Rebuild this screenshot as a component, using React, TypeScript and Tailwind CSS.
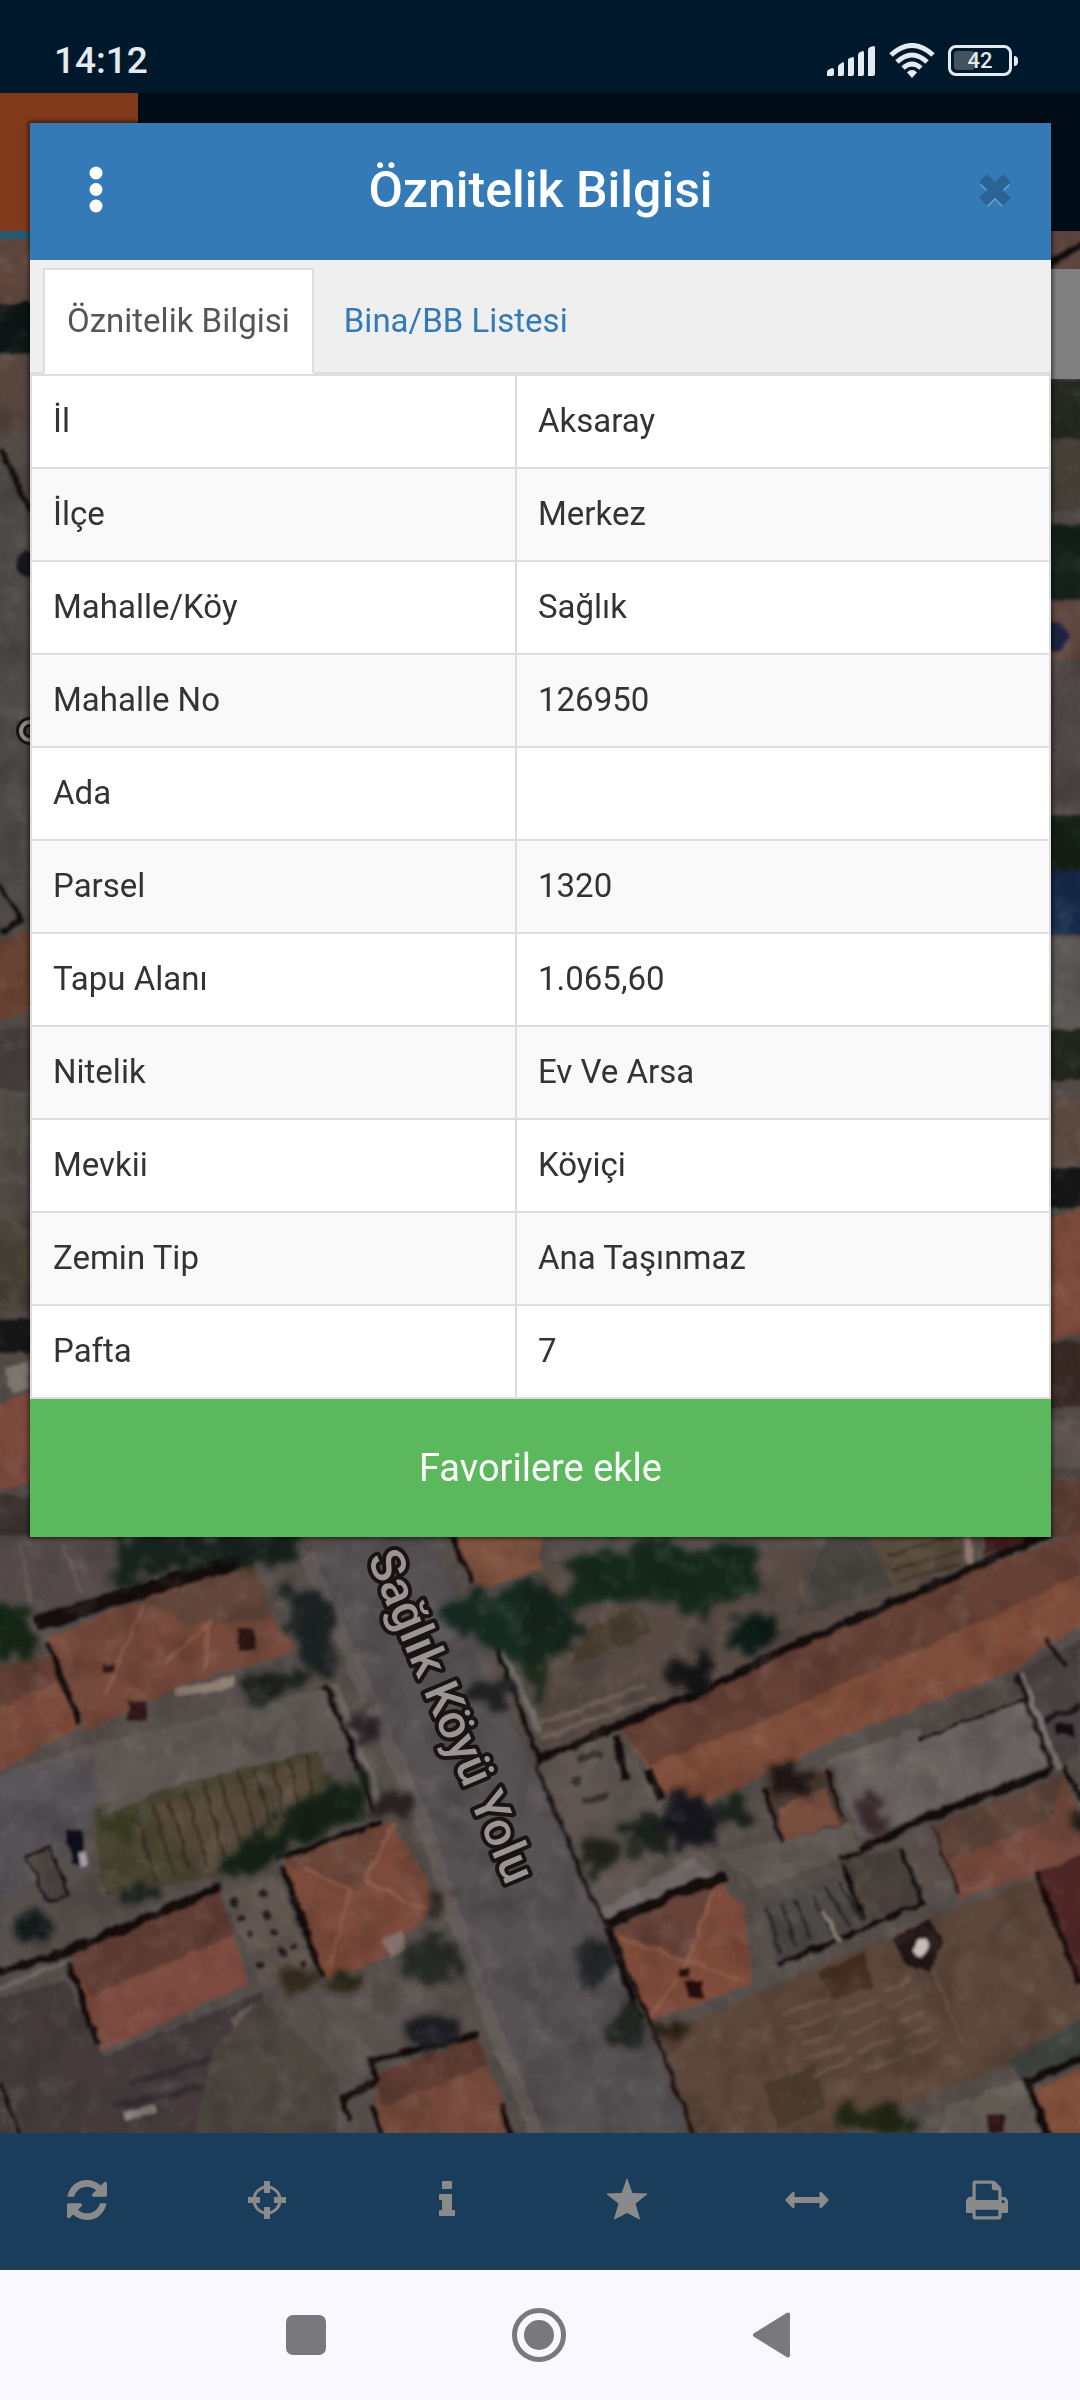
import { useState } from "react";

const rows = [
  { label: "İl", value: "Aksaray" },
  { label: "İlçe", value: "Merkez" },
  { label: "Mahalle/Köy", value: "Sağlık" },
  { label: "Mahalle No", value: "126950" },
  { label: "Ada", value: "" },
  { label: "Parsel", value: "1320" },
  { label: "Tapu Alanı", value: "1.065,60" },
  { label: "Nitelik", value: "Ev Ve Arsa" },
  { label: "Mevkii", value: "Köyiçi" },
  { label: "Zemin Tip", value: "Ana Taşınmaz" },
  { label: "Pafta", value: "7" },
];

function StatusBar() {
  return (
    <div className="h-[93px] bg-[#00182b] pl-[54px] pr-[62px] pt-7 flex items-center justify-between text-[#e4eaef]">
      <span className="text-[37px] leading-none font-medium">14:12</span>
      <div className="flex items-center gap-3">
        {/* Signal */}
        <svg width="50" height="32" viewBox="0 0 50 32" fill="currentColor" aria-hidden="true">
          <path d="M1 31v-4q0-1 1-2l4-2q2 0 2 2v4q0 2-2 2z" />
          <path d="M12 31v-9q0-2 2-3l3-2q1 0 1 2v10q0 2-2 2z" />
          <path d="M22 31V15q0-2 2-2l3-1q1 0 1 2v15q0 2-2 2z" />
          <path d="M32 31V10q0-2 2-3l3-1q1 0 1 2v21q0 2-2 2z" />
          <path d="M42 31V5q0-2 2-3l4-1q1 0 1 2v26q0 2-2 2z" />
        </svg>
        {/* Wi-Fi */}
        <svg width="48" height="36" viewBox="0 0 48 36" fill="none" stroke="currentColor" aria-hidden="true">
          <path d="M3 12Q24-7 45 12" strokeWidth="5" />
          <path d="M9 19Q24 5 39 19" strokeWidth="5" />
          <path d="M15 25Q24 17 33 25" strokeWidth="5" />
          <path d="M24 27.5q3 0 4.500 2L24 34.500l-4.500-5q1.500-2 4.500-2z" fill="currentColor" />
        </svg>
        {/* Battery */}
        <div className="flex items-center gap-0.5">
          <div className="relative w-16 h-[31px] rounded-lg border-3 border-current flex items-center justify-center">
            <div className="absolute left-[3px] top-[3px] w-[21px] h-[19px] rounded-sm bg-[#43525e]" />
            <span className="relative text-[22px] leading-none font-medium">42</span>
          </div>
          <div className="w-1 h-2.5 rounded-r-sm bg-current" />
        </div>
      </div>
    </div>
  );
}

function SatelliteMap() {
  return (
    <svg
      className="w-full flex-1 min-h-0 block"
      viewBox="0 231 1080 1902"
      preserveAspectRatio="xMidYMax slice"
      aria-hidden="true"
    >
      <defs>
        <filter id="soft" x="-5%" y="-5%" width="110%" height="110%">
          <feTurbulence type="fractalNoise" baseFrequency="0.06" numOctaves="3" seed="4" result="n" />
          <feDisplacementMap in="SourceGraphic" in2="n" scale="8" xChannelSelector="R" yChannelSelector="G" result="d" />
          <feGaussianBlur in="d" stdDeviation="1.800" />
        </filter>
        <filter id="leafy" x="-10%" y="-10%" width="120%" height="120%">
          <feTurbulence type="fractalNoise" baseFrequency="0.05" numOctaves="3" seed="9" result="n" />
          <feDisplacementMap in="SourceGraphic" in2="n" scale="36" xChannelSelector="R" yChannelSelector="G" result="d" />
          <feGaussianBlur in="d" stdDeviation="3" />
        </filter>
        <filter id="mottle" x="0" y="0" width="100%" height="100%">
          <feTurbulence type="fractalNoise" baseFrequency="0.025" numOctaves="4" seed="12" />
          <feColorMatrix values="0 0 0 0 0  0 0 0 0 0  0 0 0 0 0  2 0 0 0 -0.85" />
        </filter>
        <filter id="glow" x="0" y="0" width="100%" height="100%">
          <feTurbulence type="fractalNoise" baseFrequency="0.04" numOctaves="4" seed="31" />
          <feColorMatrix values="0 0 0 0 0.7  0 0 0 0 0.66  0 0 0 0 0.62  1.6 0 0 0 -0.82" />
        </filter>
      </defs>

      <rect y="231" width="1080" height="1902" fill="#524a46" />

      {/* West edge */}
      <g filter="url(#soft)">
        <rect x="-10" y="231" width="50" height="70" fill="#624840" />
        <rect x="-10" y="302" width="50" height="52" fill="#0f1313" />
        <path d="M-10 354h50v70l-50 10z" fill="#54453c" />
        <path d="M-10 440 40 520v410l-50-30z" fill="#4d4847" />
        <path d="M0 450 32 512" stroke="#12110e" strokeWidth="6" />
        <circle cx="29" cy="565" r="13" fill="#14171b" />
        <path d="M-5 880 22 920 0 932" stroke="#110d0c" strokeWidth="5" fill="none" />
        <path d="M-10 944l50-16v80l-50 14z" fill="#684231" />
        <rect x="-10" y="1030" width="50" height="60" fill="#443c3a" />
        <rect x="-10" y="1090" width="50" height="60" fill="#575049" />
        <rect x="-10" y="1220" width="50" height="90" fill="#4a4339" />
        <rect x="-10" y="1318" width="50" height="34" fill="#181612" />
        <path d="M4 1368 30 1360v28l-20 6z" fill="#7b746b" />
        <path d="M-10 1406 40 1388v92l-50 14z" fill="#7b4a3c" />
        <rect x="-10" y="1496" width="50" height="50" fill="#3d3433" />
      </g>

      {/* East edge */}
      <g filter="url(#soft)">
        <path d="M1040 231h50v50h-50z" fill="#60443f" />
        <path d="M1048 266 1084 242" stroke="#110a0a" strokeWidth="8" />
        <rect x="1040" y="379" width="50" height="70" fill="#252a24" />
        <rect x="1040" y="440" width="50" height="70" fill="#454139" />
        <rect x="1040" y="526" width="50" height="74" fill="#14241a" />
        <rect x="1040" y="600" width="50" height="60" fill="#5f4640" />
        <circle cx="1054" cy="636" r="15" fill="#1c2240" />
        <rect x="1040" y="660" width="50" height="150" fill="#504644" />
        <rect x="1040" y="815" width="50" height="60" fill="#122018" />
        <rect x="1040" y="870" width="50" height="66" fill="#192b4c" />
        <rect x="1040" y="940" width="50" height="90" fill="#5b5856" />
        <rect x="1040" y="1030" width="50" height="50" fill="#24251f" />
        <rect x="1040" y="1100" width="50" height="66" fill="#5c4b43" />
        <rect x="1040" y="1168" width="50" height="40" fill="#131412" />
        <path d="M1040 1222 1090 1205v126l-50 14z" fill="#7c4c3b" />
        <rect x="1040" y="1342" width="50" height="66" fill="#3a2926" />
        <rect x="1040" y="1420" width="50" height="48" fill="#615753" />
        <rect x="1040" y="1480" width="50" height="60" fill="#583a30" />
      </g>

      {/* Southern blocks */}
      <g filter="url(#soft)">
        <g transform="translate(0 1540) scale(.3444 .3827)">
          <rect x="-20" y="-10" width="3180" height="1600" fill="#57504c" />
          <path d="M0-10H340V130L110 210 0 160z" fill="#544b4b" />
          <path d="M60 20 90 160M180 10 240 140" stroke="#655a58" strokeWidth="8" />

          {/* Road */}
          <path d="M890 20 1240-10 1568 650 1730 960 1810 1160 2010 1580H1570L1400 1200 1230 740z" fill="#575152" />
          <path d="M890 40 1230 740 1400 1200 1570 1580" stroke="#645d5a" strokeWidth="40" fill="none" />
          <path d="M940 380 1000 500 1090 710" stroke="#120e0e" strokeWidth="20" fill="none" />
          <path d="M970 380 1110 690" stroke="#6f6863" strokeWidth="16" fill="none" />

          {/* Houses west of the road */}
          <path d="M-10 330 150 300 230 490-10 605z" fill="#7c4b3a" />
          <path d="M-10 330 150 300 175 370-10 440z" fill="#634034" />
          <path d="M140 250 730 50 800 210 860 290 560 370 250 500z" fill="#754a3a" />
          <path d="M420 160 730 60 800 210 540 220z" fill="#64463b" />
          <path d="M420 170 370 260 310 400M620 210 480 320M600 220V340" stroke="#8a5c49" strokeWidth="10" fill="none" />
          <path d="M100 220 420 130 730 40" stroke="#120a0b" strokeWidth="44" fill="none" />
          <path d="M140 270 230 480" stroke="#120a0a" strokeWidth="18" />
          <path d="M690 230h50v60h-50zM370 420h55v55h-55zM300 325h35v20h-35z" fill="#2f1314" />
          <path d="M510 400 680 370" stroke="#8d7e72" strokeWidth="22" />
          <path d="M240 540 940 390 1010 540 290 720-10 660V620z" fill="#605a56" />
          <path d="M-10 620 270 560 290 730-10 960z" fill="#57515a" opacity=".6" />

          {/* Vegetable garden */}
          <path d="M275 740 500 640 920 550 960 640 640 880 300 930z" fill="#4c4532" />
          <path d="M430 700 580 870 900 770 900 580z" fill="#57493a" />
          <g stroke="#383224" strokeWidth="9">
            <path d="M400 710 450 890M440 690 510 880M490 680 550 860M540 650 600 850M590 630 650 830M640 620 700 800M690 610 750 780M740 600 790 760M790 580 830 740M840 570 870 710M890 560 910 690" />
          </g>
          <path d="M75 830 145 800 200 925 140 945z" fill="#4c4340" stroke="#181012" strokeWidth="10" />
          <path d="M190 760 240 760 255 850 205 850z" fill="#10111e" />
          <path d="M225 820 250 810 255 850 232 855z" fill="#a49da5" />

          <path d="M820 840 1130 735 1240 890 1250 970 1100 1100 945 1145z" fill="#7c4c3b" />
          <path d="M820 840 1130 735 1060 900 1020 920z" fill="#6b4438" />
          <path d="M1020 915 960 1110M1060 890 1240 970M1060 890 1140 740M1020 915 880 860" stroke="#8c5c49" strokeWidth="9" />
          <path d="M800 835 1110 735" stroke="#140d0b" strokeWidth="18" />
          <path d="M820 850 935 1140" stroke="#140a0a" strokeWidth="20" />
          <path d="M1110 1040 1170 1020 1180 1070 1130 1090z" fill="#82706a" />

          <path d="M200 1080 640 920 720 1160 295 1335z" fill="#7e4c3f" />
          <path d="M200 1080 640 920 680 1030 260 1195z" fill="#603c34" />
          <path d="M-10 1130 200 1075 640 905" stroke="#120b0c" strokeWidth="26" fill="none" />
          <path d="M-10 1175 190 1105" stroke="#706963" strokeWidth="12" />
          <path d="M200 1100 285 1320" stroke="#120a0b" strokeWidth="22" />
          <path d="M650 930 800 870 910 1110 760 1170z" fill="#605650" />
          <g fill="#2b1e20">
            <circle cx="680" cy="945" r="11" />
            <circle cx="765" cy="925" r="12" />
            <circle cx="700" cy="988" r="11" />
            <circle cx="775" cy="980" r="12" />
            <circle cx="725" cy="1030" r="11" />
            <circle cx="795" cy="1028" r="11" />
            <circle cx="820" cy="1075" r="11" />
            <circle cx="755" cy="1110" r="13" />
            <circle cx="850" cy="1060" r="10" />
            <circle cx="880" cy="1110" r="10" />
          </g>

          <path d="M-10 1200 190 1150 300 1350 760 1180 900 1560H-10z" fill="#443b3d" />
          <path d="M0 1420 60 1560" stroke="#120c0c" strokeWidth="12" />
          <path d="M670 1250 770 1200 790 1270 700 1310z" fill="#6a5c58" />
          <path d="M360 1505 450 1485" stroke="#8a7f7b" strokeWidth="22" />
          <path d="M380 1420 640 1350M330 1480 620 1420" stroke="#392d33" strokeWidth="20" />
          <path d="M620 1330 760 1200 980 1400 980 1560H560z" fill="#4e463f" />
          <path d="M900 1160 1180 1090 1340 1280 1010 1380z" fill="#5a5350" />
          <path d="M1080 1400 1390 1295 1500 1560H1110z" fill="#754a3b" />
          <path d="M1080 1400 1390 1295 1420 1370 1110 1480z" fill="#5f3d33" />
          <path d="M1000 1460 1090 1410 1080 1360 1390 1290" stroke="#170d0d" strokeWidth="20" fill="none" />
          <path d="M990 1450 1020 1520M1080 1480 1110 1560M1450 1470 1490 1560" stroke="#170d0d" strokeWidth="18" />

          {/* Across the road */}
          <path d="M1310-10H1568V80L1395 130z" fill="#7e5340" />
          <path d="M1310-10 1375 110M1430 240 1570 590" stroke="#130c0b" strokeWidth="18" />
          <path d="M1440 240 1568 500" stroke="#73716c" strokeWidth="12" />

          <g transform="translate(1568 0)">
            <path d="M0 60 1240-10 1240 70 0 560z" fill="#584c44" />
            <path d="M830-10H1000L1030 120 740 200z" fill="#484541" />
            <path d="M950-10H1225L1230 60 1030 130z" fill="#5a4c3e" />
            <path d="M1010 40 1200-10M1020 80 1220 30M1040 110 1220 60" stroke="#3c3428" strokeWidth="7" />
            <path d="M1290-10H1440L1290 40z" fill="#3f1c1c" />
            <path d="M140 230 280 170 330 240 90 330z" fill="#4b3f30" />

            <path d="M230 490 1240 90 1568-20V220L1380 340 860 520 480 690 360 660z" fill="#7f4d3b" />
            <path d="M230 490 1240 90 1568-20V90L1310 200 700 450 320 590z" fill="#654135" />
            <path d="M-10 575 480 390 700 290 1240 80 1480-20" stroke="#150d0e" strokeWidth="26" fill="none" />
            <path d="M1235-10 1255 60" stroke="#90766f" strokeWidth="22" />
            <path d="M0 480 300 380M0 520 340 410" stroke="#6f625a" strokeWidth="12" />

            <path d="M0 590 220 500 350 690 520 860 190 980z" fill="#5f5753" />
            <path d="M220 510 250 630M310 600 350 680" stroke="#180d0d" strokeWidth="28" />
            <path d="M110 570 180 560M90 630h30M120 680 200 670" stroke="#3a302f" strokeWidth="20" />
            <path d="M840 570 1400 400 1470 590 930 780z" fill="#6a6260" />
            <path d="M1100 480 1380 350 1400 410 1110 510z" fill="#504a42" />
            <path d="M1100 520 1410 415" stroke="#1c1617" strokeWidth="10" />
            <path d="M1380 350 1490 600" stroke="#1d1515" strokeWidth="16" />
            <path d="M1400 350 1510 600" stroke="#7c7572" strokeWidth="18" />
            <path d="M1400 340 1568 260V560L1510 590z" fill="#4a4143" />
            <path d="M1460 470 1568 440M1470 260 1530 330" stroke="#1e1416" strokeWidth="16" />
            <path d="M1500 480h50v30h-50z" fill="#150e11" />
            <path d="M520 820 900 740 930 810 640 910z" fill="#625b57" />
            <path d="M640 650 830 600 900 740 700 790z" fill="#4b3b33" />
            <path d="M690 700 825 640 870 740 710 790z" fill="#774d3d" />
            <path d="M650 650 700 790M830 600 880 720" stroke="#1a0f0d" strokeWidth="14" />
            <path d="M930 810 1110 730 1490 600" stroke="#130c0d" strokeWidth="26" fill="none" />
            <path d="M1520 590 1568 680" stroke="#130c0d" strokeWidth="16" />

            <path d="M1140 745 1520 615 1580 760V840L1215 935z" fill="#74483c" />
            <path d="M1140 745 1520 615 1490 730 1190 835z" fill="#5f443a" />
            <path d="M1140 750 1215 920" stroke="#2b1614" strokeWidth="10" />
            <path d="M870 840 1050 800 1115 950 930 1000z" fill="#4c423d" />
            <path d="M1060 780 1140 750 1210 930 1120 950z" fill="#5a504b" />
            <path d="M870 835 930 815M1050 805 1110 950 690 1110M880 850 940 990" stroke="#181011" strokeWidth="16" fill="none" />
            <path d="M640 940 860 880 940 1000 690 1100z" fill="#4d4a47" />
            <path d="M660 960 700 1080M700 950 740 1060M740 940 790 1040M790 930 850 1030M830 910 900 1010M870 890 930 990" stroke="#2c2727" strokeWidth="10" />
            <path d="M820 970 870 1050" stroke="#8b8177" strokeWidth="10" />

            <path d="M170 970 440 830 520 880 200 990z" fill="#706a68" />
            <path d="M210 1020 510 890 590 960 620 1160 320 1255z" fill="#7e4c3b" />
            <path d="M210 1020 510 890 430 1100z" fill="#664238" />
            <path d="M510 890 430 1100 320 1250M430 1100 230 1040M430 1100 600 1150" stroke="#8c5c49" strokeWidth="8" fill="none" />
            <path d="M190 1005 400 920 540 880" stroke="#130b0c" strokeWidth="30" fill="none" />
            <path d="M190 1010 290 1250" stroke="#130b0c" strokeWidth="20" />
            <path d="M400 1120h35v20h-35zM420 1150h55v48h-40z" fill="#281010" />

            {/* Ploughed field */}
            <path d="M350 1290 1210 960 1440 880 1580 1150V1290L840 1560H440z" fill="#5b473a" />
            <path d="M810 1130 940 1080 970 1170 850 1200z" fill="#442d21" />
            <path d="M650 1420 800 1370 830 1480 690 1540z" fill="#4c3a2f" />
            <g stroke="#6d5546" strokeWidth="11">
              <path d="M700 1240 830 1200M720 1280 850 1240M760 1320 870 1280M770 1360 890 1320M790 1400 900 1360M880 1240 980 1200M900 1290 1010 1250M920 1340 1030 1300M940 1390 1050 1350M1000 1180 1080 1150M1020 1220 1100 1190M1040 1260 1120 1230M1060 1300 1140 1270M1080 1340 1160 1310" />
            </g>
            <path d="M1140 1120 1230 1320" stroke="#6d5546" strokeWidth="10" />
            <path d="M1020 1040 1130 990 1175 1050 1130 1130 1060 1110z" fill="#211315" />
            <circle cx="1105" cy="1066" r="21" fill="#c8bcb9" />
            <path d="M1440 870 1580 820V1170z" fill="#4f2527" />
            <path d="M1440 870 1568 1160" stroke="#1b0e0d" strokeWidth="20" />
            <path d="M1360 1360 1580 1250V1350L1400 1420z" fill="#404443" />
            <path d="M1180 1480 1400 1410 1470 1560H1160z" fill="#645b54" />
            <path d="M1430 1440 1580 1380V1560H1480z" fill="#824f3a" />
            <path d="M1580 1350 1415 1415 1475 1560" stroke="#150c0d" strokeWidth="26" fill="none" />
            <path d="M1300 1500h50v50h-50z" fill="#32191a" />
            <path d="M-10 590 150 940 200 1010 320 1260 450 1560" stroke="#1b1414" strokeWidth="14" fill="none" />
          </g>
        </g>
      </g>

      {/* Trees */}
      <g filter="url(#leafy)">
        <g transform="translate(0 1540) scale(.3444 .3827)">
          <path d="M340-10H880L860 60 560 60 340 120z" fill="#15211f" />
          <path d="M-20 170 90 180 110 300-20 320z" fill="#182719" />
          <path d="M820 120 950 120 980 340 880 340z" fill="#1b2322" />
          <path d="M690 360 830 320 900 370 720 440z" fill="#1a201d" />
          <path d="M640 850 780 760 930 640 1060 620 1080 720 640 890z" fill="#152119" />
          <ellipse cx="1060" cy="480" rx="45" ry="45" fill="#2c2426" />
          <ellipse cx="1140" cy="690" rx="50" ry="30" fill="#2b2422" />
          <ellipse cx="350" cy="740" rx="70" ry="40" fill="#373a22" />
          <ellipse cx="90" cy="1010" rx="60" ry="50" fill="#181b1e" />
          <ellipse cx="400" cy="925" rx="60" ry="28" fill="#1b201b" />
          <ellipse cx="1260" cy="1105" rx="85" ry="62" fill="#262a26" />
          <ellipse cx="1270" cy="940" rx="35" ry="35" fill="#322825" />
          <ellipse cx="1260" cy="1290" rx="75" ry="50" fill="#1f1f20" />
          <ellipse cx="870" cy="1155" rx="50" ry="28" fill="#322a1e" />
          <ellipse cx="1010" cy="1155" rx="60" ry="18" fill="#2c2618" />
          <path d="M1270 180 1568 90V400L1490 300 1330 250z" fill="#182a24" />
          <path d="M1370 380 1480 360 1490 440 1400 440z" fill="#232320" />
          <g transform="translate(1568 0)">
            <path d="M80 40 300 0 620 40 640 120 480 200 330 150 80 180z" fill="#12291f" />
            <path d="M-30 100 90 140 100 260-30 360z" fill="#13251d" />
            <path d="M-30 340 40 320 20 430-30 440z" fill="#232b1e" />
            <ellipse cx="615" cy="245" rx="60" ry="55" fill="#0f1a17" />
            <ellipse cx="445" cy="350" rx="60" ry="45" fill="#181818" />
            <ellipse cx="440" cy="735" rx="80" ry="70" fill="#17191a" />
            <ellipse cx="570" cy="710" rx="55" ry="45" fill="#1b201b" />
            <ellipse cx="310" cy="770" rx="60" ry="60" fill="#1b211d" />
            <ellipse cx="180" cy="825" rx="50" ry="45" fill="#20201a" />
            <ellipse cx="160" cy="1110" rx="55" ry="60" fill="#242628" />
            <ellipse cx="250" cy="1270" rx="55" ry="55" fill="#232522" />
            <ellipse cx="730" cy="630" rx="70" ry="35" fill="#221815" />
            <ellipse cx="390" cy="1285" rx="50" ry="22" fill="#2b2115" />
            <ellipse cx="1560" cy="735" rx="40" ry="40" fill="#1b1a15" />
            <ellipse cx="960" cy="1520" rx="130" ry="40" fill="#212519" />
            <ellipse cx="960" cy="710" rx="40" ry="50" fill="#3b2c2e" />
          </g>
        </g>
      </g>

      <rect y="231" width="1080" height="1902" filter="url(#mottle)" opacity=".18" />
      <rect y="231" width="1080" height="1902" filter="url(#glow)" opacity=".18" />

      {/* Search box behind the panel */}
      <rect x="1000" y="269" width="80" height="110" fill="#808080" />

      {/* Street names */}
      <g
        fill="#9a9592"
        stroke="#181414"
        strokeWidth="8"
        strokeLinejoin="round"
        paintOrder="stroke"
        fontFamily="Roboto, sans-serif"
        fontWeight="500"
        fontSize="48"
      >
        <text transform="translate(367 1558) rotate(67)">Sağlık Köyü Yolu</text>
      </g>
      <circle cx="30" cy="731" r="9" fill="none" stroke="#181414" strokeWidth="10" />
      <circle cx="30" cy="731" r="9" fill="none" stroke="#8f8a88" strokeWidth="4" />
    </svg>
  );
}

function AttributePanel() {
  const [tab, setTab] = useState("info");

  const tabBase = "px-[22px] pb-0.5 -mb-0.5 h-[106px] text-[33px] leading-none border-2 cursor-pointer";
  const tabOn = "bg-white text-[#555] border-[#ddd] border-b-white";
  const tabOff = "text-[#337ab7] border-transparent";

  return (
    <section className="relative ml-[30px] mr-[29px] mt-[30px] bg-white shadow-[0_0_4px_2px_rgba(0,0,0,0.5)]">
      <header className="h-[137px] bg-[#337ab7] px-[38px] pb-1 flex items-center justify-between">
        <button type="button" aria-label="Menü" className="w-14 h-14 flex items-center justify-center">
          <svg width="14" height="48" viewBox="0 0 14 48" fill="#fff">
            <circle cx="7" cy="7" r="6.500" />
            <circle cx="7" cy="23.500" r="6.500" />
            <circle cx="7" cy="40" r="6.500" />
          </svg>
        </button>
        <h1 className="text-[50px] leading-none font-medium text-white">Öznitelik Bilgisi</h1>
        <button type="button" aria-label="Kapat" className="w-14 h-14 flex items-center justify-end">
          <svg width="36" height="40" viewBox="0 0 36 40" strokeWidth="11">
            <path d="M7 11 29 33M29 11 7 33" stroke="#6ea3d3" />
            <path d="M6 8 30 32M30 8 6 32" stroke="#2a6496" />
          </svg>
        </button>
      </header>

      <div role="tablist" className="bg-[#efefef] pt-2 px-[13px] flex items-end gap-1.5 border-b-2 border-[#ddd]">
        <button
          type="button"
          role="tab"
          aria-selected={tab === "info"}
          onClick={() => setTab("info")}
          className={`${tabBase} ${tab === "info" ? tabOn : tabOff}`}
        >
          Öznitelik Bilgisi
        </button>
        <button
          type="button"
          role="tab"
          aria-selected={tab === "list"}
          onClick={() => setTab("list")}
          className={`${tabBase} ${tab === "list" ? tabOn : tabOff}`}
        >
          Bina/BB Listesi
        </button>
      </div>

      <table className="w-full border-collapse border-2 border-[#ddd] text-[33px] leading-none text-[#333]">
        <tbody>
          {rows.map((row) => (
            <tr key={row.label} className="h-[93px] even:bg-[#f9f9f9]">
              <th scope="row" className="w-[485px] border-2 border-[#ddd] px-[21px] pb-0.5 text-left font-normal">
                {row.label}
              </th>
              <td className="border-2 border-[#ddd] px-[21px] pb-0.5">{row.value}</td>
            </tr>
          ))}
        </tbody>
      </table>

      <button type="button" className="block w-full h-[138px] bg-[#5cb85c] text-white text-[38px] leading-none">
        Favorilere ekle
      </button>
    </section>
  );
}

function MapToolbar() {
  const btn = "flex items-center justify-center pr-1.5 pb-1";
  return (
    <div className="relative h-[137px] bg-[#1a3d5c] text-[#8a8a8a] grid grid-cols-6">
      <button type="button" aria-label="Yenile" className={btn}>
        <svg width="40" height="40" viewBox="0 0 1536 1536" fill="currentColor">
          <path d="M1511 928q0 5-1 7-64 268-268 434.500T764 1536q-146 0-282.500-55T238 1324l-129 129q-19 19-45 19t-45-19-19-45V960q0-26 19-45t45-19h448q26 0 45 19t19 45-19 45l-137 137q71 66 161 102t187 36q134 0 250-65t186-179q11-17 53-117 8-23 30-23h192q13 0 22.500 9.500t9.500 22.500zm25-800v448q0 26-19 45t-45 19h-448q-26 0-45-19t-19-45 19-45l138-138Q969 256 768 256q-134 0-250 65T332 500q-11 17-53 117-8 23-30 23H50q-13 0-22.500-9.500T18 608v-7q65-268 270-434.500T768 0q146 0 284 55.500T1297 212l130-129q19-19 45-19t45 19 19 45z" />
        </svg>
      </button>
      <button type="button" aria-label="Konum" className={btn}>
        <svg width="40" height="40" viewBox="0 0 40 40" fill="none" stroke="currentColor">
          <circle cx="20" cy="20" r="13" strokeWidth="3" />
          <path d="M20 1v12M20 27v12M1 20h12M27 20h12" strokeWidth="6" />
        </svg>
      </button>
      <button type="button" aria-label="Bilgi" className={btn}>
        <svg width="40" height="40" viewBox="0 0 40 40" fill="currentColor">
          <rect x="15" y="1" width="10" height="8" rx="1" />
          <path d="M13 14h11q1 0 1 1v15h2q1 0 1 1v4q0 1-1 1H13q-1 0-1-1v-4q0-1 1-1h2V20h-2q-1 0-1-1v-4q0-1 1-1z" />
        </svg>
      </button>
      <button type="button" aria-label="Favoriler" className={btn}>
        <svg width="42" height="44" viewBox="0 0 42 44" fill="currentColor" stroke="currentColor" strokeLinejoin="round">
          <path d="m21 1 5 14.500 15 .5-12 9.500L33.500 41 21 34.500 8.500 41 13 25.500 1 16l15-.500z" />
        </svg>
      </button>
      <button type="button" aria-label="Ölçüm" className={btn}>
        <svg width="46" height="40" viewBox="0 0 46 40" fill="currentColor">
          <path d="M1 20 8 12.500Q10.500 11 10.500 13V17H35.500V13Q35.500 11 38 12.500L45 20 38 27.500Q35.500 29 35.500 27V23H10.500V27Q10.500 29 8 27.500z" />
        </svg>
      </button>
      <button type="button" aria-label="Yazdır" className={btn}>
        <svg width="42" height="42" viewBox="0 64 1664 1664" fill="currentColor">
          <path d="M384 1536h896v-256H384v256zm0-640h896V512h-160q-40 0-68-28t-28-68V256H384v640zm1152 64q0-26-19-45t-45-19-45 19-19 45 19 45 45 19 45-19 19-45zm128 0v416q0 13-9.500 22.500t-22.500 9.500h-224v160q0 40-28 68t-68 28H352q-40 0-68-28t-28-68v-160H32q-13 0-22.500-9.500T0 1376V960q0-79 56.500-135.500T192 768h64V224q0-40 28-68t68-28h672q40 0 88 20t76 48l152 152q28 28 48 76t20 88v256h64q79 0 135.500 56.500T1664 960z" />
        </svg>
      </button>
    </div>
  );
}

function SystemNav() {
  return (
    <nav className="relative h-[130px] bg-[#f9f8ff] flex items-center justify-center gap-[179px] pr-0.5">
      <button type="button" aria-label="Son uygulamalar">
        <svg width="54" height="54" viewBox="0 0 54 54" fill="#79787c">
          <rect x="7" y="7" width="40" height="40" rx="7" />
        </svg>
      </button>
      <button type="button" aria-label="Ana ekran">
        <svg width="54" height="54" viewBox="0 0 54 54" fill="#79787c">
          <circle cx="27" cy="27" r="24.500" fill="none" stroke="#79787c" strokeWidth="5" />
          <circle cx="27" cy="27" r="15" />
        </svg>
      </button>
      <button type="button" aria-label="Geri">
        <svg width="54" height="54" viewBox="0 0 54 54" fill="#79787c" stroke="#79787c" strokeWidth="4" strokeLinejoin="round">
          <path d="M10 27 43 6.500v41z" />
        </svg>
      </button>
    </nav>
  );
}

export default function App() {
  return (
    <div className="min-h-screen flex flex-col font-[Roboto,sans-serif]">
      <StatusBar />

      <main className="relative flex-1 overflow-hidden pb-8">
        {/* Dimmed app behind the panel */}
        <div className="absolute inset-0 flex flex-col">
          <div className="h-[138px] shrink-0 bg-[#000d18]">
            <div className="w-[138px] h-full bg-[#80391b]" />
          </div>
          <SatelliteMap />
          <div className="absolute left-0 top-[138px] w-[138px] h-2 bg-[#265a70]" />
        </div>

        <AttributePanel />
      </main>

      <MapToolbar />
      <SystemNav />
    </div>
  );
}
